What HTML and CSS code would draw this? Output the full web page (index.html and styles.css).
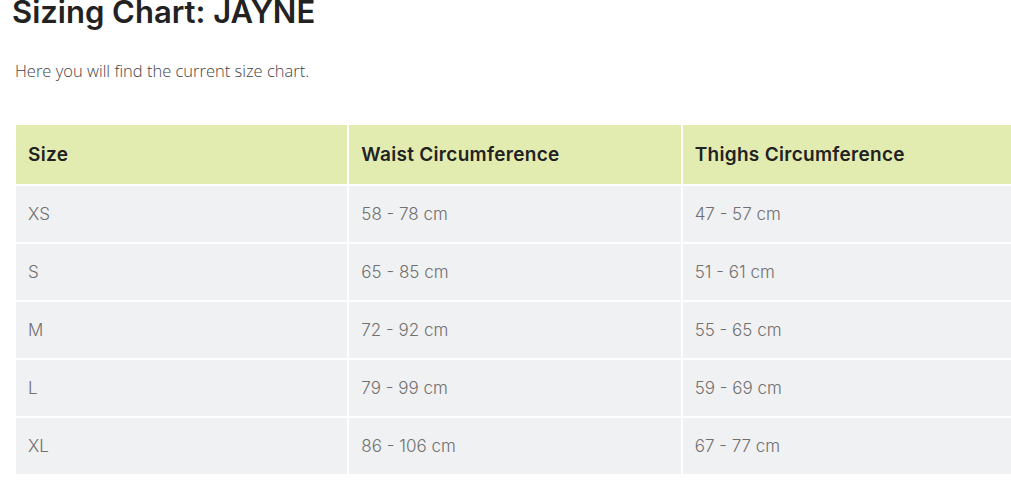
FILE: index.html
```html
<!DOCTYPE html>
<html lang="en">
<head>
<meta charset="utf-8">
<title>Sizing Chart: JAYNE</title>
<link rel="stylesheet" href="styles.css">
</head>
<body>
<main class="page">
  <h1 class="title">Sizing Chart: JAYNE</h1>
  <p class="intro">Here you will find the current size chart.</p>
  <table class="chart">
    <thead>
      <tr><th>Size</th><th>Waist Circumference</th><th>Thighs Circumference</th></tr>
    </thead>
    <tbody>
      <tr><td>XS</td><td>58 - 78 cm</td><td>47 - 57 cm</td></tr>
      <tr><td>S</td><td>65 - 85 cm</td><td>51 - 61 cm</td></tr>
      <tr><td>M</td><td>72 - 92 cm</td><td>55 - 65 cm</td></tr>
      <tr><td>L</td><td>79 - 99 cm</td><td>59 - 69 cm</td></tr>
      <tr><td>XL</td><td>86 - 106 cm</td><td>67 - 77 cm</td></tr>
    </tbody>
  </table>
</main>
</body>
</html>
```
FILE: styles.css
```css
html, body {
  margin: 0;
  padding: 0;
  background: #ffffff;
  overflow: hidden;
}
.page {
  padding: 0 0 0 12px;
  width: 1010px;
}
.title {
  font-family: "Inter", "DejaVu Sans", sans-serif;
  font-weight: 600;
  font-size: 31px;
  line-height: 36px;
  color: #222222;
  margin: -6px 0 0 0;
}
.intro {
  font-family: "Open Sans", sans-serif;
  font-weight: 300;
  font-size: 16.5px;
  line-height: 22px;
  color: #444444;
  margin: 30px 0 0 3px;
}
.chart {
  margin: 41px 0 0 2px;
  border-collapse: separate;
  border-spacing: 2px;
  width: 1002px;
  table-layout: fixed;
  font-family: "Inter", sans-serif;
}
.chart th,
.chart td {
  text-align: left;
  padding: 0 0 0 12px;
}
.chart th {
  background: #e2ecb0;
  height: 59px;
  font-size: 19px;
  font-weight: 600;
  letter-spacing: 0.3px;
  color: #222222;
}
.chart td {
  background: #f0f1f3;
  height: 56px;
  font-size: 17px;
  font-weight: 300;
  color: #707070;
}
```
